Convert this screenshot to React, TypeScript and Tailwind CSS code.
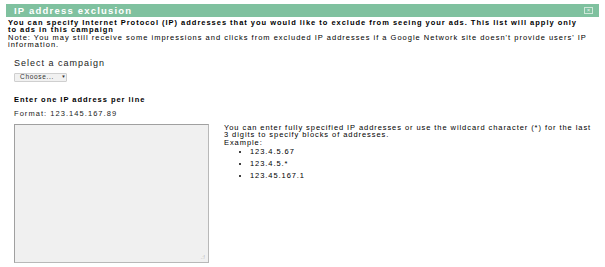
export default function App() {
  return (
    <div className="w-[605px] h-[267px] bg-white overflow-hidden font-['Liberation_Sans',Arial,sans-serif] text-black">
      <div className="mx-[6px] mt-[4px] h-[13px] bg-[#7fc19f] flex items-center justify-between pl-[8px] pr-[6px]">
        <span className="text-white font-bold text-[9.5px] leading-none tracking-[1.2px]">IP address exclusion</span>
        <span className="w-[9px] h-[7px] border border-[#cfe8da] text-[#e8f5ee] text-[6px] leading-[5px] flex items-center justify-center">×</span>
      </div>
      <div className="px-[8px] pt-[2px] text-[7.5px] leading-[7px] whitespace-nowrap">
        <p className="font-bold tracking-[0.98px]">
          You can specify Internet Protocol (IP) addresses that you would like to exclude from seeing your ads. This list will apply only
          <br />
          to ads in this campaign
        </p>
        <p className="mt-[1px] tracking-[1px]">
          Note: You may still receive some impressions and clicks from excluded IP addresses if a Google Network site doesn't provide users' IP
          <br />
          information.
        </p>
      </div>
      <div className="pl-[14px]">
        <div className="mt-[10px] text-[9px] leading-[10px] tracking-[1px] text-[#222]">Select a campaign</div>
        <button className="mt-[5px] h-[9px] w-[53px] pl-[5px] flex items-center gap-[7px] border border-[#cfcfcf] bg-[#f1f1f1] rounded-[1px] text-[6.5px] tracking-[0.7px] text-[#333] leading-none">
          Choose...
          <span className="text-[4.5px]">▼</span>
        </button>
        <div className="mt-[14px] font-bold text-[7.5px] leading-[8px] tracking-[0.97px]">Enter one IP address per line</div>
        <div className="mt-[6px] text-[7.5px] leading-[8px] tracking-[1.05px] text-[#222]">Format: 123.145.167.89</div>
        <div className="mt-[6px] flex">
          <div className="relative w-[195px] h-[139px] bg-[#f0f0f0] border border-[#b8b8b8] border-t-[#a0a0a0] border-l-[#a0a0a0]">
            <span className="absolute right-[3px] bottom-[2px] text-[5px] leading-none text-[#aaa]">.:!</span>
          </div>
          <div className="ml-[15px] text-[7.5px] leading-[7px] tracking-[0.93px] whitespace-nowrap">
            <p>
              You can enter fully specified IP addresses or use the wildcard character (*) for the last
              <br />
              3 digits to specify blocks of addresses.
            </p>
            <p className="mt-[0.5px]">Example:</p>
            <ul className="mt-[2px] ml-[26px] list-disc flex flex-col gap-[5px]">
              <li>123.4.5.67</li>
              <li>123.4.5.*</li>
              <li>123.45.167.1</li>
            </ul>
          </div>
        </div>
      </div>
    </div>
  );
}
